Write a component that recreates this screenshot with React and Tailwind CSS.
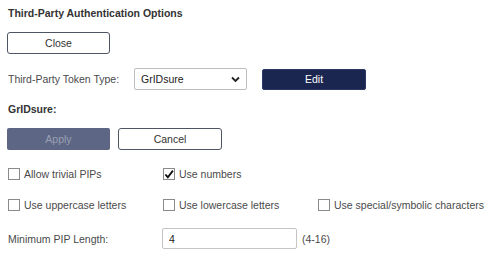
import React, { useState } from "react";

function Check({ checked, label, onChange }) {
  return (
    <label className="flex items-center gap-[4px] cursor-pointer whitespace-nowrap">
      <span
        onClick={onChange}
        className="w-[12px] h-[12px] border border-[#8a8a8a] bg-white flex items-center justify-center shrink-0"
      >
        {checked && (
          <svg width="11" height="11" viewBox="0 0 11 11">
            <path d="M1.5 5.5 L4.2 8.5 L9.8 1.2" fill="none" stroke="#111" strokeWidth="2" />
          </svg>
        )}
      </span>
      <span>{label}</span>
    </label>
  );
}

export default function App() {
  const [opts, setOpts] = useState({
    trivial: false,
    numbers: true,
    upper: false,
    lower: false,
    special: false,
  });
  const toggle = (k) => setOpts((p) => ({ ...p, [k]: !p[k] }));

  return (
    <div
      className="w-[489px] h-[256px] bg-white text-[10.5px] leading-[14px] text-[#4a4a4a] pl-[7px] pt-[6px]"
      style={{ fontFamily: '"Liberation Sans", Arial, sans-serif' }}
    >
      {/* 제목 */}
      <div className="font-bold text-[#333] pl-[1px]">Third-Party Authentication Options</div>

      <button className="mt-[12px] w-[103px] h-[22px] border border-[#4d5562] rounded-[3px] text-[#333] bg-white">
        Close
      </button>

      {/* 토큰 유형 */}
      <div className="flex items-center mt-[14px] h-[22px]">
        <span className="w-[127px] pl-[1px]">Third-Party Token Type:</span>
        <div className="relative w-[113px] h-[22px] border border-[#bdbdbd] rounded-[2px] flex items-center pl-[6px] text-[#222]">
          GrIDsure
          <svg className="absolute right-[6px] top-[7px]" width="9" height="7" viewBox="0 0 9 7">
            <path d="M1 1.5 L4.5 5 L8 1.5" fill="none" stroke="#222" strokeWidth="1.8" />
          </svg>
        </div>
        <button className="ml-[15px] w-[104px] h-[21px] bg-[#1b2650] text-white rounded-[2px] border border-[#2c3763]">
          Edit
        </button>
      </div>

      <div className="font-bold text-[#333] mt-[12px] pl-[1px]">GrIDsure:</div>

      <div className="flex gap-[8px] mt-[12px]">
        <button className="w-[103px] h-[22px] bg-[#5d6685] text-[#9aa0b3] rounded-[2px]" disabled>
          Apply
        </button>
        <button className="w-[104px] h-[22px] border border-[#4d5562] rounded-[3px] text-[#333] bg-white">
          Cancel
        </button>
      </div>

      <div className="grid grid-cols-[155px_155px_165px] mt-[17px] pl-[1px] gap-y-[17px]">
        <Check checked={opts.trivial} label="Allow trivial PIPs" onChange={() => toggle("trivial")} />
        <Check checked={opts.numbers} label="Use numbers" onChange={() => toggle("numbers")} />
        <span />
        <Check checked={opts.upper} label="Use uppercase letters" onChange={() => toggle("upper")} />
        <Check checked={opts.lower} label="Use lowercase letters" onChange={() => toggle("lower")} />
        <Check checked={opts.special} label="Use special/symbolic characters" onChange={() => toggle("special")} />
      </div>

      <div className="flex items-center mt-[16px]">
        <span className="w-[155px] pl-[1px]">Minimum PIP Length:</span>
        <input
          defaultValue="4"
          className="w-[135px] h-[21px] border border-[#c4c4c4] rounded-[2px] pl-[6px] text-[#222] outline-none"
        />
        <span className="ml-[5px]">(4-16)</span>
      </div>
    </div>
  );
}
